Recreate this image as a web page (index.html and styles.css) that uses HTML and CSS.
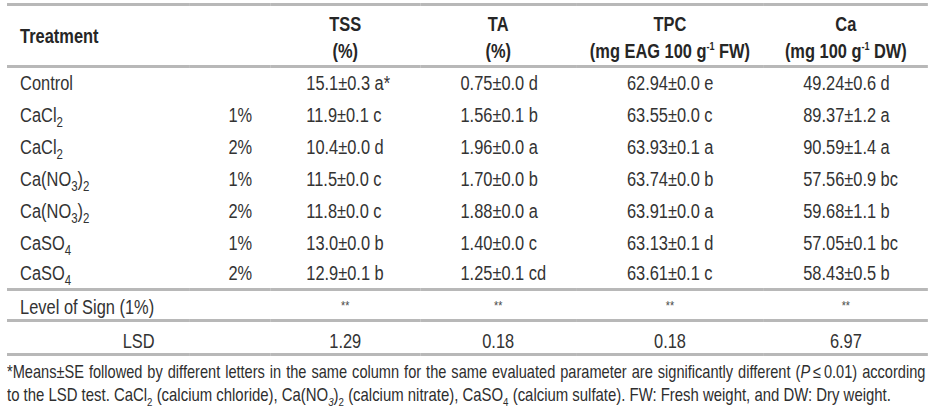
FILE: index.html
```html
<!DOCTYPE html>
<html lang="en">
<head>
<meta charset="utf-8">
<title>Table</title>
<link rel="stylesheet" href="styles.css">
</head>
<body>
<div class="page">
  <div class="sheet">
    <table class="data">
      <colgroup>
        <col class="c-treat">
        <col class="c-pct">
        <col class="c-tss">
        <col class="c-ta">
        <col class="c-tpc">
        <col class="c-ca">
      </colgroup>
      <thead>
        <tr class="head">
          <th class="h-treat" colspan="2">Treatment</th>
          <th>TSS<br>(%)</th>
          <th>TA<br>(%)</th>
          <th>TPC<br>(mg EAG 100 g<sup>-1</sup> FW)</th>
          <th>Ca<br>(mg 100 g<sup>-1</sup> DW)</th>
        </tr>
      </thead>
      <tbody class="rows">
        <tr><td class="name">Control</td><td class="pct"></td><td class="v-tss">15.1±0.3 a*</td><td class="v-ta">0.75±0.0 d</td><td class="v-tpc">62.94±0.0 e</td><td class="v-ca">49.24±0.6 d</td></tr>
        <tr><td class="name">CaCl<sub>2</sub></td><td class="pct">1%</td><td class="v-tss">11.9±0.1 c</td><td class="v-ta">1.56±0.1 b</td><td class="v-tpc">63.55±0.0 c</td><td class="v-ca">89.37±1.2 a</td></tr>
        <tr><td class="name">CaCl<sub>2</sub></td><td class="pct">2%</td><td class="v-tss">10.4±0.0 d</td><td class="v-ta">1.96±0.0 a</td><td class="v-tpc">63.93±0.1 a</td><td class="v-ca">90.59±1.4 a</td></tr>
        <tr><td class="name">Ca(NO<sub>3</sub>)<sub>2</sub></td><td class="pct">1%</td><td class="v-tss">11.5±0.0 c</td><td class="v-ta">1.70±0.0 b</td><td class="v-tpc">63.74±0.0 b</td><td class="v-ca">57.56±0.9 bc</td></tr>
        <tr><td class="name">Ca(NO<sub>3</sub>)<sub>2</sub></td><td class="pct">2%</td><td class="v-tss">11.8±0.0 c</td><td class="v-ta">1.88±0.0 a</td><td class="v-tpc">63.91±0.0 a</td><td class="v-ca">59.68±1.1 b</td></tr>
        <tr><td class="name">CaSO<sub>4</sub></td><td class="pct">1%</td><td class="v-tss">13.0±0.0 b</td><td class="v-ta">1.40±0.0 c</td><td class="v-tpc">63.13±0.1 d</td><td class="v-ca">57.05±0.1 bc</td></tr>
        <tr><td class="name">CaSO<sub>4</sub></td><td class="pct">2%</td><td class="v-tss">12.9±0.1 b</td><td class="v-ta">1.25±0.1 cd</td><td class="v-tpc">63.61±0.1 c</td><td class="v-ca">58.43±0.5 b</td></tr>
      </tbody>
      <tbody>
        <tr class="sign"><td class="name" colspan="2">Level of Sign (1%)</td><td class="stars">**</td><td class="stars">**</td><td class="stars">**</td><td class="stars">**</td></tr>
      </tbody>
      <tbody>
        <tr class="lsd"><td colspan="2">LSD</td><td>1.29</td><td>0.18</td><td>0.18</td><td>6.97</td></tr>
      </tbody>
    </table>
    <div class="note">
      <p class="note-line first">*Means±SE followed by different letters in the same column for the same evaluated parameter are significantly different (<i>P</i>&thinsp;≤&thinsp;0.01) according</p>
      <p class="note-line second">to the LSD test. CaCl<sub>2</sub> (calcium chloride), Ca(NO<sub><i>3</i></sub>)<sub>2</sub> (calcium nitrate), CaSO<sub>4</sub> (calcium sulfate). FW: Fresh weight, and DW: Dry weight.</p>
    </div>
  </div>
</div>
</body>
</html>
```

FILE: styles.css
```css
html, body {
  margin: 0;
  padding: 0;
  background: #ffffff;
  overflow: hidden;
}

body {
  font-family: "Liberation Sans", Arial, sans-serif;
  color: #333333;
}

.page {
  padding: 3px 0 0 7px;
  width: 921px;
  height: 407px;
  overflow: hidden;
}

/* narrow face: Arial-metric type drawn at 82% width */
.sheet {
  width: 1123px;
  transform: scaleX(0.82);
  transform-origin: 0 0;
}

.data {
  width: 1123px;
  border-collapse: collapse;
  table-layout: fixed;
  font-size: 20px;
  border-top: 3px solid #b8b8b8;
}

.c-treat { width: 223px; }
.c-pct { width: 98px; }
.c-tss { width: 183px; }
.c-ta { width: 190px; }
.c-tpc { width: 229px; }
.c-ca { width: 200px; }

td, th {
  padding: 0;
  white-space: nowrap;
}

.head th {
  height: 54px;
  font-weight: bold;
  color: #262626;
  line-height: 27px;
  text-align: center;
  vertical-align: middle;
  border-bottom: 3px solid #b8b8b8;
  padding-top: 5px;
}

.head .h-treat {
  text-align: left;
  padding-left: 16px;
  padding-top: 1px;
}

sup {
  font-size: 0.55em;
  vertical-align: 0.7em;
  line-height: 0;
}

sub {
  font-size: 0.7em;
  vertical-align: -0.35em;
  line-height: 0;
}

.rows tr {
  height: 32px;
}

.rows tr:last-child {
  height: 31px;
}

.rows td {
  vertical-align: middle;
  padding-top: 1px;
}

.name {
  padding-left: 16px !important;
}

.pct {
  text-align: right;
  padding-right: 22px !important;
}

.v-tss { padding-left: 44px !important; }
.v-ta { padding-left: 49px !important; }
.v-tpc { padding-left: 62px !important; }
.v-ca { padding-left: 48px !important; }

.sign {
  height: 29px;
  border-top: 3px solid #b8b8b8;
  border-bottom: 3px solid #b8b8b8;
}

.sign td {
  vertical-align: middle;
  padding-top: 5px;
}

.stars {
  text-align: center;
  font-size: 13px;
  color: #4a4a4a;
  padding-bottom: 4px !important;
}

.lsd {
  height: 29px;
  border-bottom: 3px solid #b8b8b8;
}

.lsd td {
  text-align: center;
  vertical-align: middle;
  padding-top: 8px;
}

.note {
  color: #2e2e2e;
  margin-top: 5px;
  width: 1120px;
}

.note-line {
  margin: 0;
  line-height: 23px;
  white-space: nowrap;
}

.note-line.first {
  font-size: 17.8px;
  white-space: normal;
  text-align: justify;
  text-align-last: justify;
}

.note-line.second {
  font-size: 18.2px;
}

.note sub {
  font-size: 0.65em;
  vertical-align: -0.4em;
}
```
